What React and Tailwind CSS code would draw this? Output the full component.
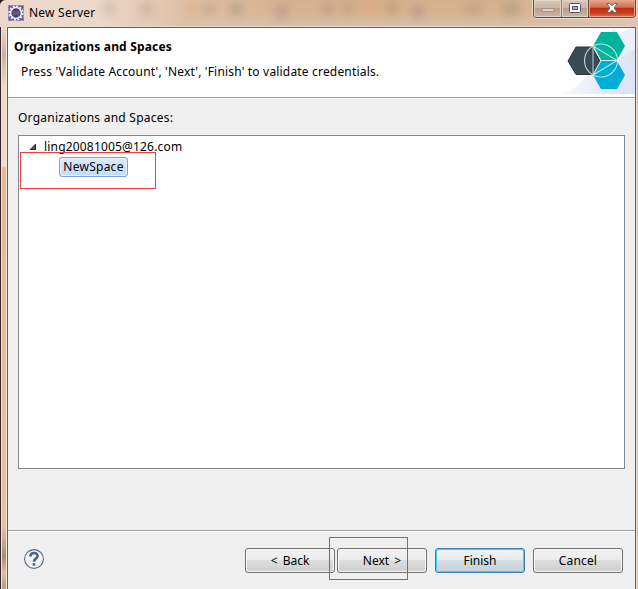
import React from "react";

const btn =
  "flex h-[25px] w-[90px] items-center justify-center rounded-[3px] border text-[12px] leading-none whitespace-pre";
const grey =
  "border-[#707070] bg-[linear-gradient(#f2f2f2_0%,#ebebeb_48%,#dddddd_50%,#cfcfcf_100%)] shadow-[inset_0_0_0_1px_#f8f8f8]";

function TitleBar() {
  return (
    <div className="relative flex h-[27px] w-[638px] shrink-0 items-start justify-between overflow-hidden rounded-tl-[6px] bg-[linear-gradient(#d5b08e_0%,#d8b590_55%,#d7baa2_75%,#d8bfaa_100%)]">
      <div className="absolute inset-0 bg-[linear-gradient(90deg,#ecd9cb_0%,#ecd8c9_15%,#dfc2aa_28%,transparent_45%,transparent_80%,#dfc4ae_100%)]" />
      <div className="absolute inset-x-0 top-0 h-[18px] opacity-30 blur-[4px]">
        <i className="absolute left-[103px] top-[3px] h-3 w-3 bg-[#a59385]" />
        <i className="absolute left-[140px] top-[3px] h-3 w-3 bg-[#9f8a78]" />
        <i className="absolute left-[184px] top-[3px] h-3 w-4 bg-[#e1a15b]" />
        <i className="absolute left-[203px] top-[3px] h-3 w-3 bg-[#a98766]" />
        <i className="absolute left-[230px] top-[3px] h-3 w-3 bg-[#6f796b]" />
        <i className="absolute left-[276px] top-[6px] h-3 w-3 bg-[#946186]" />
        <i className="absolute left-[322px] top-[3px] h-3 w-3 bg-[#917f88]" />
        <i className="absolute left-[342px] top-[3px] h-3 w-3 bg-[#a98766]" />
        <i className="absolute left-[361px] top-[3px] h-3 w-5 bg-[#e89670]" />
        <i className="absolute left-[386px] top-[3px] h-3 w-3 bg-[#a07958]" />
        <i className="absolute left-[412px] top-[6px] h-3 w-3 bg-[#89617f]" />
        <i className="absolute left-[463px] top-[3px] h-3 w-5 bg-[#a98b76]" />
        <i className="absolute left-[503px] top-[3px] h-3 w-4 bg-[#7e766a]" />
      </div>
      <div className="absolute inset-x-[7px] bottom-0 h-px bg-[#eddbcd]" />
      <div className="relative flex items-start pl-2 pt-[5px]">
        <svg width="16" height="16" viewBox="0 0 16 16">
          <rect width="16" height="16" fill="#66579b" />
          <rect x=".5" y=".5" width="15" height="15" fill="none" stroke="#9387b5" />
          <circle cx="8" cy="8" r="6.7" fill="none" stroke="#eee9f1" strokeWidth="1.8" strokeDasharray="2.1 1.4" />
          <circle cx="8" cy="8" r="5.4" fill="#4a4266" stroke="#f4f1f4" strokeWidth="1.5" />
          <path d="M4 7h8M4.3 9h7.4" stroke="#8077a1" strokeWidth=".9" />
        </svg>
        <span className="ml-[5px] text-[12px] leading-[16px] tracking-[0.22px]">New Server</span>
      </div>
      <div className="relative mr-[2px] flex h-[18px] w-[103px] overflow-hidden rounded-b-[4px] border border-t-0 border-[#5a4942] shadow-[0_0_0_1px_#f1dfd2]">
        <div className="flex w-[28px] items-start justify-center border-r border-[#8d7868] bg-[linear-gradient(#dac9bb_0%,#cbb39f_45%,#b99d88_50%,#ceb7a4_100%)] pt-[8px] shadow-[inset_0_0_0_1px_#e3d3c5]">
          <div className="h-[4px] w-[12px] rounded-[1px] border border-[#a39489] bg-[#ddd3ca]" />
        </div>
        <div className="flex w-[27px] items-start justify-center border-r border-[#6f4338] bg-[linear-gradient(#dac9bb_0%,#cbb39f_45%,#b99d88_50%,#ceb7a4_100%)] pt-[3px] shadow-[inset_0_0_0_1px_#e3d3c5]">
          <svg width="12" height="10" viewBox="0 0 12 10">
            <rect x=".5" y=".5" width="11" height="9" rx="1" fill="#fff" stroke="#555461" />
            <rect x="3.5" y="3.5" width="5" height="3" fill="#c6ac97" stroke="#555461" />
          </svg>
        </div>
        <div className="flex flex-1 items-start justify-center bg-[linear-gradient(#e4a68f_0%,#d36e50_43%,#bd2d0e_48%,#c83c1c_75%,#dd7048_100%)] pt-[3px] shadow-[inset_0_0_0_1px_#e9a48e]">
          <svg width="12" height="10" viewBox="0 0 12 10">
            <path d="M.6.5h3.2L6 2.8 8.2.5h3.2L8 5l3.4 4.5H8.2L6 7.2 3.8 9.5H.6L4 5z" fill="#fff" stroke="#635465" strokeWidth=".9" />
          </svg>
        </div>
      </div>
    </div>
  );
}

function Logo() {
  return (
    <svg width="75" height="66" viewBox="0 0 75 66">
      <defs>
        <linearGradient id="glow" x1="0" y1="0" x2="1" y2=".25">
          <stop offset="0" stopColor="#fff" />
          <stop offset="1" stopColor="#dce4f6" />
        </linearGradient>
      </defs>
      <path d="M54 0h21v66H0C27 60 33 34 54 0Z" fill="url(#glow)" />
      <path d="M58 0H75V22Q64 24 58 34Z" fill="#e9effb" />
      <path d="M54 0H75Q64 1 58 7Z" fill="#fff" />
      <path d="M8 33 16 19H32L40 33 32 46.5H16Z" fill="#3b4b54" stroke="#26353e" />
      <path d="M33 18 41 4H57L65 18 57 32H41Z" fill="#00b39b" />
      <path d="M33 47 41 33H57L65 47 57 61H41Z" fill="#00aed5" />
      <g fill="none" stroke="#d5efed" strokeOpacity=".85" strokeWidth="1.1">
        <path d="M40 32.5H57M33 18 57 32.5 33 47M33 18 41 32.5 33 47" />
        <circle cx="41" cy="32.5" r="16.5" />
        <path d="M33 18V47" stroke="#b3bbc0" strokeWidth="1.4" />
      </g>
    </svg>
  );
}

function Tree() {
  return (
    <div className="relative h-[334px] w-[607px] shrink-0 border border-[#828790] bg-white text-[12px]">
      <div className="flex h-[20px] items-center pl-[10px]">
        <svg className="mt-[2px]" width="8" height="8" viewBox="0 0 8 8">
          <path d="M6.5 1.2V6.5H1.2Z" fill="#555" stroke="#262626" />
        </svg>
        <span className="ml-[7px] mt-[2px] leading-[20px] tracking-[0.18px]">ling20081005@126.com</span>
      </div>
      <div className="ml-[40px] mt-[1px] flex h-[20px] w-[69px] items-center justify-center rounded-[3px] border border-[#7da2ce] bg-[linear-gradient(#dcebfc,#c1dbfc)] tracking-[0.25px] shadow-[inset_0_0_0_1px_#e9f2fd]">
        NewSpace
      </div>
      <div className="absolute left-[1px] top-[16px] h-[37px] w-[136px] border border-[#f33b3b]" />
    </div>
  );
}

export default function App() {
  return (
    <div className="flex h-[589px] w-[638px] flex-col overflow-hidden bg-[#2a2220] font-['Noto_Sans','Open_Sans',sans-serif] text-[12px] text-black">
      <TitleBar />
      <div className="flex min-h-0 flex-1">
        <div className="flex w-[8px] shrink-0">
          <div className="w-px bg-[#2d2624]" />
          <div className="w-px bg-[#f6e3d6]" />
          <div className="w-[4px] bg-[linear-gradient(#edd9cb_0px,#c6b2a5_28px,#f1d9c9_60px,#f3dac9_139px,#e3b893_141px,#e8c0a2_500px,#a78c78_530px,#e5bb9d_545px,#b79e8d_562px)]" />
          <div className="w-px bg-[#f7e7db]" />
          <div className="w-px bg-[#6d5b50]" />
        </div>
        <main className="flex w-[627px] shrink-0 flex-col border-t border-[#6d5b50] bg-[#efefef]">
          <header className="flex h-[70px] shrink-0 justify-between border-b border-[#a0a0a0] bg-white">
            <div className="pl-[6px] pt-[10px]">
              <h1 className="text-[12px] font-bold leading-[17px] tracking-[0.18px] whitespace-nowrap">Organizations and Spaces</h1>
              <p className="ml-[7px] mt-[8px] leading-[17px] tracking-[0.18px] whitespace-nowrap">
                Press 'Validate Account', 'Next', 'Finish' to validate credentials.
              </p>
            </div>
            <Logo />
          </header>
          <section className="flex h-[432px] shrink-0 flex-col border-t border-white pl-[10px] pt-[10px]">
            <label className="mb-[9px] leading-[17px] tracking-[0.25px]">Organizations and Spaces:</label>
            <Tree />
          </section>
          <footer className="relative flex flex-1 border-t border-[#a0a0a0] shadow-[inset_0_1px_0_#fff]">
            <svg className="ml-[15px] mt-[18px]" width="22" height="22" viewBox="0 0 22 22">
              <circle cx="11" cy="10" r="9.4" fill="#f5f5f5" stroke="#526688" strokeWidth="1.1" />
              <path d="M7.4 7.6C7.4 2.8 14.8 3 14.5 7.2 14.2 9.8 11 9.6 11 12.8" fill="none" stroke="#4e648b" strokeWidth="2.7" />
              <rect x="9.6" y="14.2" width="2.8" height="2.5" fill="#4e648b" />
            </svg>
            <div className="ml-auto mr-[12px] mt-[17px] flex">
              <div className={`${btn} ${grey} [word-spacing:2px]`}>&lt; Back</div>
              <div className={`${btn} ${grey} ml-[2px] [word-spacing:2px]`}>Next &gt;</div>
              <div className={`${btn} ml-[8px] border-[#3c7fb1] bg-[linear-gradient(#eef3f5_0%,#e4ebee_48%,#d3dde2_50%,#c5d2d9_100%)] shadow-[inset_0_0_0_1px_#48c8f0]`}>Finish</div>
              <div className={`${btn} ${grey} ml-[8px] tracking-[0.15px]`}>Cancel</div>
            </div>
            <div className="absolute left-[321px] top-[6px] h-[43px] w-[79px] border border-[#f33b3b]" />
          </footer>
        </main>
        <div className="flex w-[3px]">
          <div className="w-px bg-[#6d5b50]" />
          <div className="w-px bg-[#f4e1d5]" />
          <div className="w-px bg-[#d8baa4]" />
        </div>
      </div>
    </div>
  );
}
